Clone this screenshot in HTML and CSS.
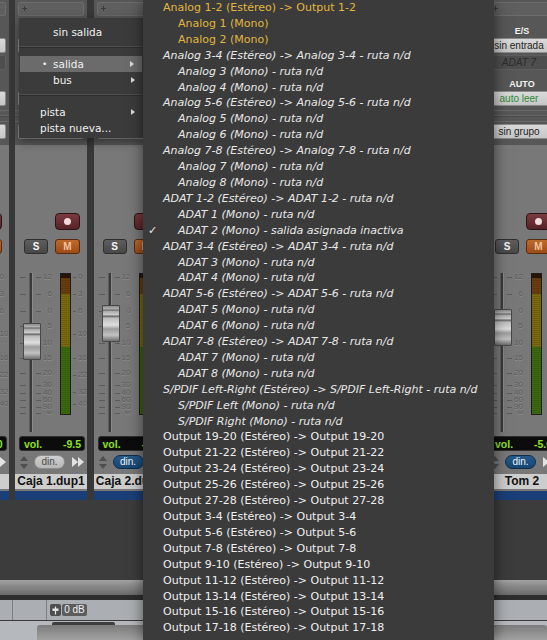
FILE: index.html
```html
<!DOCTYPE html>
<html lang="es">
<head>
<meta charset="utf-8">
<title>Mezclador - salida</title>
<link rel="stylesheet" href="styles.css">
</head>
<body>
<div class="mixer">
  <div class="strips">
    <div class="strip">
      <div class="io">
        <div class="insert"><i class="plus"></i></div>
        <div class="lbl">E/S</div>
        <div class="sel light in">sin entrada</div>
        <div class="sel dim out">ADAT 1</div>
        <div class="lbl">AUTO</div>
        <div class="sel light auto">auto leer</div>
        <div class="rule"></div>
        <div class="sel light grp">sin grupo</div>
      </div>
      <div class="rec-row"><span class="rec"><i></i></span></div>
      <div class="sm-row"><span class="btn solo">S</span><span class="btn mute">M</span></div>
      <div class="fader-area">
        <div class="track"></div>
        <span class="mk k1">12</span><span class="mk k2">6</span><span class="mk k3">0</span><span class="mk k4">5</span><span class="mk k5">10</span><span class="mk k6">15</span><span class="mk k7">20</span><span class="mk k8">30</span><span class="mk k9">40</span><span class="mk k10">60</span><span class="mk k11">90</span><span class="mk k12">∞</span>
        <div class="cap" style="top:40px"></div>
        <div class="meter"></div>
        <span class="ms s1">0</span><span class="ms s2">3</span><span class="ms s3">6</span><span class="ms s4">10</span><span class="ms s5">16</span><span class="ms s6">22</span><span class="ms s7">32</span><span class="ms s8">40</span>
      </div>
      <div class="vol"><span>vol.</span><span>0.0</span></div>
      <div class="din-row"><span class="updown"></span><span class="din">din.</span><svg class="ff" viewBox="0 0 13 10"><path d="M0 0L6 5L0 10Z M6 0L12 5L6 10Z" fill="#e2e2e2"/></svg></div>
      <div class="name">Caja 1</div>
      <div class="selbar"></div>
    </div>
    <div class="strip">
      <div class="io">
        <div class="insert"><i class="plus"></i></div>
        <div class="lbl">E/S</div>
        <div class="sel light in">sin entrada</div>
        <div class="sel dim out">ADAT 2</div>
        <div class="lbl">AUTO</div>
        <div class="sel light auto">auto leer</div>
        <div class="rule"></div>
        <div class="sel light grp">sin grupo</div>
      </div>
      <div class="rec-row"><span class="rec"><i></i></span></div>
      <div class="sm-row"><span class="btn solo">S</span><span class="btn mute">M</span></div>
      <div class="fader-area">
        <div class="track"></div>
        <span class="mk k1">12</span><span class="mk k2">6</span><span class="mk k3">0</span><span class="mk k4">5</span><span class="mk k5">10</span><span class="mk k6">15</span><span class="mk k7">20</span><span class="mk k8">30</span><span class="mk k9">40</span><span class="mk k10">60</span><span class="mk k11">90</span><span class="mk k12">∞</span>
        <div class="cap" style="top:53px"></div>
        <div class="meter"></div>
        <span class="ms s1">0</span><span class="ms s2">3</span><span class="ms s3">6</span><span class="ms s4">10</span><span class="ms s5">16</span><span class="ms s6">22</span><span class="ms s7">32</span><span class="ms s8">40</span>
      </div>
      <div class="vol"><span>vol.</span><span>-9.5</span></div>
      <div class="din-row"><span class="updown"></span><span class="din">din.</span><svg class="ff" viewBox="0 0 13 10"><path d="M0 0L6 5L0 10Z M6 0L12 5L6 10Z" fill="#e2e2e2"/></svg></div>
      <div class="name">Caja 1.dup1</div>
      <div class="selbar"></div>
    </div>
    <div class="strip">
      <div class="io">
        <div class="insert"><i class="plus"></i></div>
        <div class="lbl">E/S</div>
        <div class="sel light in">sin entrada</div>
        <div class="sel dim out">ADAT 3</div>
        <div class="lbl">AUTO</div>
        <div class="sel light auto">auto leer</div>
        <div class="rule"></div>
        <div class="sel light grp">sin grupo</div>
      </div>
      <div class="rec-row"><span class="rec"><i></i></span></div>
      <div class="sm-row"><span class="btn solo">S</span><span class="btn mute">M</span></div>
      <div class="fader-area">
        <div class="track"></div>
        <span class="mk k1">12</span><span class="mk k2">6</span><span class="mk k3">0</span><span class="mk k4">5</span><span class="mk k5">10</span><span class="mk k6">15</span><span class="mk k7">20</span><span class="mk k8">30</span><span class="mk k9">40</span><span class="mk k10">60</span><span class="mk k11">90</span><span class="mk k12">∞</span>
        <div class="cap" style="top:35px"></div>
        <div class="meter"></div>
      </div>
      <div class="vol"><span>vol.</span><span>-9.5</span></div>
      <div class="din-row"><span class="updown"></span><span class="din on">din.</span></div>
      <div class="name">Caja 2.dup1</div>
      <div class="selbar"></div>
    </div>
    <div class="strip hidden-strip"></div>
    <div class="strip hidden-strip"></div>
    <div class="strip hidden-strip"></div>
    <div class="strip hidden-strip"></div>
    <div class="strip">
      <div class="io">
        <div class="insert"><i class="plus"></i></div>
        <div class="lbl">E/S</div>
        <div class="sel light in">sin entrada</div>
        <div class="sel dim out">ADAT 7</div>
        <div class="lbl">AUTO</div>
        <div class="sel light auto">auto leer</div>
        <div class="rule"></div>
        <div class="sel light grp">sin grupo</div>
      </div>
      <div class="rec-row"><span class="rec"><i></i></span></div>
      <div class="sm-row"><span class="btn solo">S</span><span class="btn mute">M</span></div>
      <div class="fader-area">
        <div class="track"></div>
        <span class="mk k1">12</span><span class="mk k2">6</span><span class="mk k3">0</span><span class="mk k4">5</span><span class="mk k5">10</span><span class="mk k6">15</span><span class="mk k7">20</span><span class="mk k8">30</span><span class="mk k9">40</span><span class="mk k10">60</span><span class="mk k11">90</span><span class="mk k12">∞</span>
        <div class="cap" style="top:39px"></div>
        <div class="meter"></div>
      </div>
      <div class="vol"><span>vol.</span><span>-5.0</span></div>
      <div class="din-row"><span class="updown"></span><span class="din on">din.</span><svg class="ff" viewBox="0 0 13 10"><path d="M0 0L6 5L0 10Z M6 0L12 5L6 10Z" fill="#e2e2e2"/></svg></div>
      <div class="name">Tom 2</div>
      <div class="selbar"></div>
    </div>
  </div>
  <div class="darkband"></div>
  <div class="hbar"></div>
  <div class="hgap"></div>
  <div class="panel1">
    <span class="cell c1"></span>
    <span class="cell c2"></span>
    <span class="badge"><span class="bicon"><svg viewBox="0 0 9 9"><path d="M4.5 0.5V8.5" stroke="#e8e8e8" stroke-width="1.2"/><rect x="1.5" y="2.5" width="6" height="2.4" fill="#e8e8e8"/></svg></span><span class="btext">0 dB</span></span>
  </div>
  <div class="panel2"><div class="tab"><span class="grip"></span></div></div>
</div>

<div class="popup">
  <div class="pi">sin salida</div>
  <div class="sep"></div>
  <div class="pi hl sub">salida</div>
  <div class="pi sub">bus</div>
  <div class="sep"></div>
  <div class="pi wide sub">pista</div>
  <div class="pi wide">pista nueva...</div>
</div>

<ul class="menu">
  <li class="cur">Analog 1-2 (Estéreo) -&gt; Output 1-2</li>
  <li class="cur mono">Analog 1 (Mono)</li>
  <li class="cur mono">Analog 2 (Mono)</li>
  <li class="na">Analog 3-4 (Estéreo) -&gt; Analog 3-4 - ruta n/d</li>
  <li class="na mono">Analog 3 (Mono) - ruta n/d</li>
  <li class="na mono">Analog 4 (Mono) - ruta n/d</li>
  <li class="na">Analog 5-6 (Estéreo) -&gt; Analog 5-6 - ruta n/d</li>
  <li class="na mono">Analog 5 (Mono) - ruta n/d</li>
  <li class="na mono">Analog 6 (Mono) - ruta n/d</li>
  <li class="na">Analog 7-8 (Estéreo) -&gt; Analog 7-8 - ruta n/d</li>
  <li class="na mono">Analog 7 (Mono) - ruta n/d</li>
  <li class="na mono">Analog 8 (Mono) - ruta n/d</li>
  <li class="na">ADAT 1-2 (Estéreo) -&gt; ADAT 1-2 - ruta n/d</li>
  <li class="na mono">ADAT 1 (Mono) - ruta n/d</li>
  <li class="na mono chk">ADAT 2 (Mono) - salida asignada inactiva</li>
  <li class="na">ADAT 3-4 (Estéreo) -&gt; ADAT 3-4 - ruta n/d</li>
  <li class="na mono">ADAT 3 (Mono) - ruta n/d</li>
  <li class="na mono">ADAT 4 (Mono) - ruta n/d</li>
  <li class="na">ADAT 5-6 (Estéreo) -&gt; ADAT 5-6 - ruta n/d</li>
  <li class="na mono">ADAT 5 (Mono) - ruta n/d</li>
  <li class="na mono">ADAT 6 (Mono) - ruta n/d</li>
  <li class="na">ADAT 7-8 (Estéreo) -&gt; ADAT 7-8 - ruta n/d</li>
  <li class="na mono">ADAT 7 (Mono) - ruta n/d</li>
  <li class="na mono">ADAT 8 (Mono) - ruta n/d</li>
  <li class="na">S/PDIF Left-Right (Estéreo) -&gt; S/PDIF Left-Right - ruta n/d</li>
  <li class="na mono">S/PDIF Left (Mono) - ruta n/d</li>
  <li class="na mono">S/PDIF Right (Mono) - ruta n/d</li>
  <li>Output 19-20 (Estéreo) -&gt; Output 19-20</li>
  <li>Output 21-22 (Estéreo) -&gt; Output 21-22</li>
  <li>Output 23-24 (Estéreo) -&gt; Output 23-24</li>
  <li>Output 25-26 (Estéreo) -&gt; Output 25-26</li>
  <li>Output 27-28 (Estéreo) -&gt; Output 27-28</li>
  <li>Output 3-4 (Estéreo) -&gt; Output 3-4</li>
  <li>Output 5-6 (Estéreo) -&gt; Output 5-6</li>
  <li>Output 7-8 (Estéreo) -&gt; Output 7-8</li>
  <li>Output 9-10 (Estéreo) -&gt; Output 9-10</li>
  <li>Output 11-12 (Estéreo) -&gt; Output 11-12</li>
  <li>Output 13-14 (Estéreo) -&gt; Output 13-14</li>
  <li>Output 15-16 (Estéreo) -&gt; Output 15-16</li>
  <li>Output 17-18 (Estéreo) -&gt; Output 17-18</li>
</ul>
</body>
</html>
```
FILE: styles.css
```css
* { box-sizing: border-box; }
html, body { margin: 0; padding: 0; }
body {
  width: 547px;
  height: 640px;
  overflow: hidden;
  position: relative;
  background: #3c3c3c;
  font-family: "Liberation Sans", Arial, sans-serif;
}

/* ---------- mixer ---------- */
.mixer { display: flex; flex-direction: column; height: 640px; }
.strips {
  flex: none;
  display: flex;
  gap: 6.5px;
  margin-left: -63.5px;
  height: 500px;
  background: #383838;
}
.strip {
  flex: none;
  width: 72px;
  height: 500px;
  background: #787878;
  display: flex;
  flex-direction: column;
}
.io {
  flex: none;
  height: 145px;
  background: #575757;
  display: flex;
  flex-direction: column;
}
.insert {
  flex: none;
  height: 14px;
  margin: 2px 3px 1px;
  background: #5f5f5f;
  border: 1px solid #6c6c6c;
  border-radius: 2px;
  position: relative;
}
.plus { position: absolute; left: 3px; top: 3px; width: 5px; height: 5px; }
.plus::before, .plus::after { content: ""; position: absolute; background: #3a3a3a; }
.plus::before { left: 2px; top: 0; width: 1px; height: 5px; }
.plus::after { left: 0; top: 2px; width: 5px; height: 1px; }

.lbl {
  flex: none;
  height: 12px;
  margin-top: 8px;
  text-align: center;
  font: bold 9px/12px "Liberation Sans", Arial, sans-serif;
  color: #f2f2f2;
}
.sel {
  flex: none;
  height: 15px;
  margin: 1px 3px 0;
  padding-right: 6px;
  border-radius: 2px;
  font: 10px/13px "Liberation Sans", Arial, sans-serif;
  text-align: center;
  white-space: nowrap;
  overflow: hidden;
}
.sel.light {
  background: linear-gradient(#dadada, #c6c6c6);
  border: 1px solid #8c8c8c;
  color: #1e1e1e;
}
.sel.dim {
  margin-top: 2px;
  background: #4e4e4e;
  border: 1px solid #5e5e5e;
  color: #2c2c2c;
  font-style: italic;
}
.sel.auto { color: #2f8a35; }
.rule {
  flex: none;
  height: 12px;
  margin-top: 4px;
  border-top: 1px solid #6a6a6a;
  border-bottom: 1px solid #6a6a6a;
  position: relative;
}
.rule::after {
  content: ""; position: absolute; left: 0; right: 0; top: 4px;
  border-top: 1px solid #666; border-bottom: 1px solid #4a4a4a;
}
.sel.grp { margin-top: 2px; }

.rec-row {
  flex: none;
  height: 17px;
  margin-top: 68px;
  display: flex;
  justify-content: flex-end;
  padding-right: 7px;
}
.rec {
  width: 25px;
  height: 17px;
  border-radius: 4px;
  background: linear-gradient(#7a3a3e, #582328);
  border: 1px solid #2c1416;
  display: flex;
  align-items: center;
  justify-content: center;
}
.rec i { width: 7px; height: 7px; border-radius: 50%; background: #f0dcdc; }

.sm-row {
  flex: none;
  height: 15px;
  margin-top: 9px;
  display: flex;
  padding-left: 9px;
  gap: 7px;
}
.btn {
  height: 15px;
  border-radius: 3px;
  font: bold 10px/13px "Liberation Sans", Arial, sans-serif;
  text-align: center;
}
.solo {
  width: 24px;
  background: linear-gradient(#5e5e5e, #474747);
  border: 1px solid #2e2e2e;
  color: #f4f4f4;
}
.mute {
  width: 25px;
  background: linear-gradient(#bf6a2c, #9c4c16);
  border: 1px solid #5a2a0a;
  color: #f3c49a;
}

.fader-area {
  flex: none;
  position: relative;
  height: 162px;
  margin-top: 16px;
}
.track {
  position: absolute;
  left: 14px;
  top: 3px;
  width: 4px;
  height: 159px;
  background: #3a3a3a;
  border-left: 1px solid #5c5c5c;
  border-right: 1px solid #8a8a8a;
}
.mk {
  position: absolute;
  left: 4px;
  width: 33px;
  height: 8px;
  font: 8px/8px "Liberation Sans", Arial, sans-serif;
  color: #5c5c5c;
  text-shadow: 0 1px 0 rgba(255,255,255,0.18);
  text-align: right;
}
.mk::before, .mk::after {
  content: ""; position: absolute; top: 4px; height: 1px; background: #5c5c5c;
}
.mk::before { left: 1px; width: 6px; }
.mk::after { left: 17px; width: 5px; }
.k1 { top: 3px; } .k2 { top: 20px; } .k3 { top: 37px; } .k4 { top: 52px; }
.k5 { top: 69px; } .k6 { top: 84px; } .k7 { top: 99px; } .k8 { top: 111px; }
.k9 { top: 119px; } .k10 { top: 126px; } .k11 { top: 133px; } .k12 { top: 139px; }

.cap {
  position: absolute;
  left: 8px;
  width: 18px;
  height: 37px;
  border: 1px solid #474747;
  border-radius: 1px;
  background: linear-gradient(#8a8a8a 0, #b4b4b4 3px, #5c5c5c 4px, #a8a8a8 5px, #cfcfcf 9px, #5a5a5a 10px, #bcbcbc 12px, #dedede 19px, #9c9c9c 23px, #c2c2c2 29px, #6e6e6e 35px);
}
.meter {
  position: absolute;
  left: 45px;
  top: 3px;
  width: 11px;
  height: 142px;
  border: 1px solid #1d1d1d;
  background:
    repeating-linear-gradient(rgba(0,0,0,0.12) 0 1px, transparent 1px 2px),
    linear-gradient(#2b1508 0 4px, #6a3f0e 4px 20px, #7b6a10 20px 73px, #3d690f 73px);
}
.ms {
  position: absolute;
  left: 58px;
  width: 13px;
  height: 8px;
  padding-left: 5px;
  font: 8px/8px "Liberation Sans", Arial, sans-serif;
  color: #5c5c5c;
  text-shadow: 0 1px 0 rgba(255,255,255,0.18);
}
.ms::before { content: ""; position: absolute; left: 0; top: 4px; width: 3px; height: 1px; background: #5c5c5c; }
.s1 { top: 3px; } .s2 { top: 20px; } .s3 { top: 37px; } .s4 { top: 60px; }
.s5 { top: 84px; } .s6 { top: 101px; } .s7 { top: 118px; } .s8 { top: 130px; }

.vol {
  flex: none;
  height: 15px;
  margin: 4px 2px 0 4px;
  padding: 0 3px 0 4px;
  background: #0c0c0c;
  border: 1px solid #2e2e2e;
  border-radius: 3px;
  display: flex;
  justify-content: space-between;
  align-items: center;
  color: #8fe21e;
  font: bold 10.5px "Liberation Sans", Arial, sans-serif;
  white-space: nowrap;
}
.din-row {
  flex: none;
  height: 14px;
  margin-top: 4px;
  display: flex;
  align-items: center;
  padding-left: 5px;
}
.updown { position: relative; width: 8px; height: 13px; flex: none; }
.updown::before, .updown::after {
  content: ""; position: absolute; left: 0;
  border-left: 4px solid transparent; border-right: 4px solid transparent;
}
.updown::before { top: 0; border-bottom: 5px solid #4e4e4e; }
.updown::after { bottom: 0; border-top: 5px solid #4e4e4e; }
.din {
  flex: none;
  width: 31px;
  height: 14px;
  margin-left: 6px;
  border-radius: 7px;
  background: linear-gradient(#cfcfcf, #b8b8b8);
  border: 1px solid #8e8e8e;
  font: 10px/12px "Liberation Sans", Arial, sans-serif;
  color: #4a4a4a;
  text-align: center;
}
.din.on { background: linear-gradient(#245a8a, #174673); border-color: #0e2e4e; color: #f2f6fa; }
.ff { flex: none; width: 13px; height: 10px; margin-left: 7px; }

.name {
  flex: none;
  height: 15px;
  margin-top: 5px;
  background: #cdcdcd;
  font: bold 12px/15px "Liberation Sans", Arial, sans-serif;
  color: #111;
  text-align: center;
  white-space: nowrap;
  overflow: hidden;
}
.selbar { flex: none; height: 9px; margin-top: 2px; background: #1a3f78; }

.darkband { flex: none; height: 80px; background: #3c3c3c; }
.hbar { flex: none; height: 15px; background: linear-gradient(#a4a4a4, #8c8c8c 35%, #6b6b6b); }
.hgap { flex: none; height: 5px; background: #2e2e2e; }
.panel1 {
  flex: none;
  height: 21px;
  background: #abafb3;
  border-bottom: 1px solid #3a3a3a;
  display: flex;
  align-items: center;
}
.cell { height: 20px; border-right: 1px solid #7c8084; }
.c1 { width: 13px; }
.c2 { width: 34px; }
.badge { display: flex; gap: 1px; margin-left: 3px; height: 12px; }
.bicon { width: 11px; height: 12px; background: #4e4e4e; border-radius: 2px; display: flex; align-items: center; justify-content: center; }
.bicon svg { width: 9px; height: 9px; }
.btext {
  width: 25px; height: 12px; background: #5c5c5c; border-radius: 2px;
  font: 10px/12px "Liberation Sans", Arial, sans-serif; color: #f0f0f0; text-align: center;
}
.panel2 { flex: 1; background: #b5b9bd; padding: 4px 0 0 37px; }
.tab {
  height: 16px;
  border-radius: 3px 3px 0 0;
  background: linear-gradient(#7c7c7c, #a4a4a4);
  position: relative;
}
.grip { position: absolute; left: 15px; top: -3px; width: 63px; height: 3px; background: #3e3e3e; border-radius: 2px 2px 0 0; }

/* ---------- output submenu ---------- */
.popup {
  position: absolute;
  left: 19px;
  top: 18px;
  width: 124px;
  height: 120px;
  padding-top: 6px;
  background: #3b3b3b;
  box-shadow: 0 3px 10px rgba(0,0,0,0.45);
  font: 10.5px "DejaVu Sans", "Liberation Sans", sans-serif;
  color: #f0f0f0;
}
.pi { height: 16px; line-height: 16px; padding-left: 34px; position: relative; white-space: nowrap; }
.pi.wide { padding-left: 21px; }
.pi.sub::after {
  content: ""; position: absolute; right: 8px; top: 5px;
  border-left: 4px solid #dcdcdc; border-top: 3px solid transparent; border-bottom: 3px solid transparent;
}
.pi.hl { background: #6b6b6b; margin: 0 1px; padding-left: 33px; }
.pi.hl::before { content: "\2022"; position: absolute; left: 22px; font-size: 9px; }
.sep { height: 16px; position: relative; }
.sep::after {
  content: ""; position: absolute; left: 0; right: 0; top: 6px;
  border-top: 1px solid #4e4e4e; border-bottom: 1px solid #2e2e2e;
}

/* ---------- main output menu ---------- */
.menu {
  position: absolute;
  left: 143px;
  top: 0;
  width: 351px;
  height: 640px;
  margin: 0;
  padding: 0;
  list-style: none;
  background: #3b3b3b;
  box-shadow: 0 2px 14px rgba(0,0,0,0.55);
  font: 11px "DejaVu Sans", "Liberation Sans", sans-serif;
  color: #f0f0f0;
}
.menu li {
  height: 15.92px;
  line-height: 15.92px;
  padding-left: 20px;
  white-space: nowrap;
  position: relative;
}
.menu li.mono { padding-left: 35px; }
.menu li.na { font-style: italic; color: #e8e8e8; }
.menu li.cur { color: #e2b63e; }
.menu li.chk::before { content: "\2713"; position: absolute; left: 5px; font-style: normal; }
```
